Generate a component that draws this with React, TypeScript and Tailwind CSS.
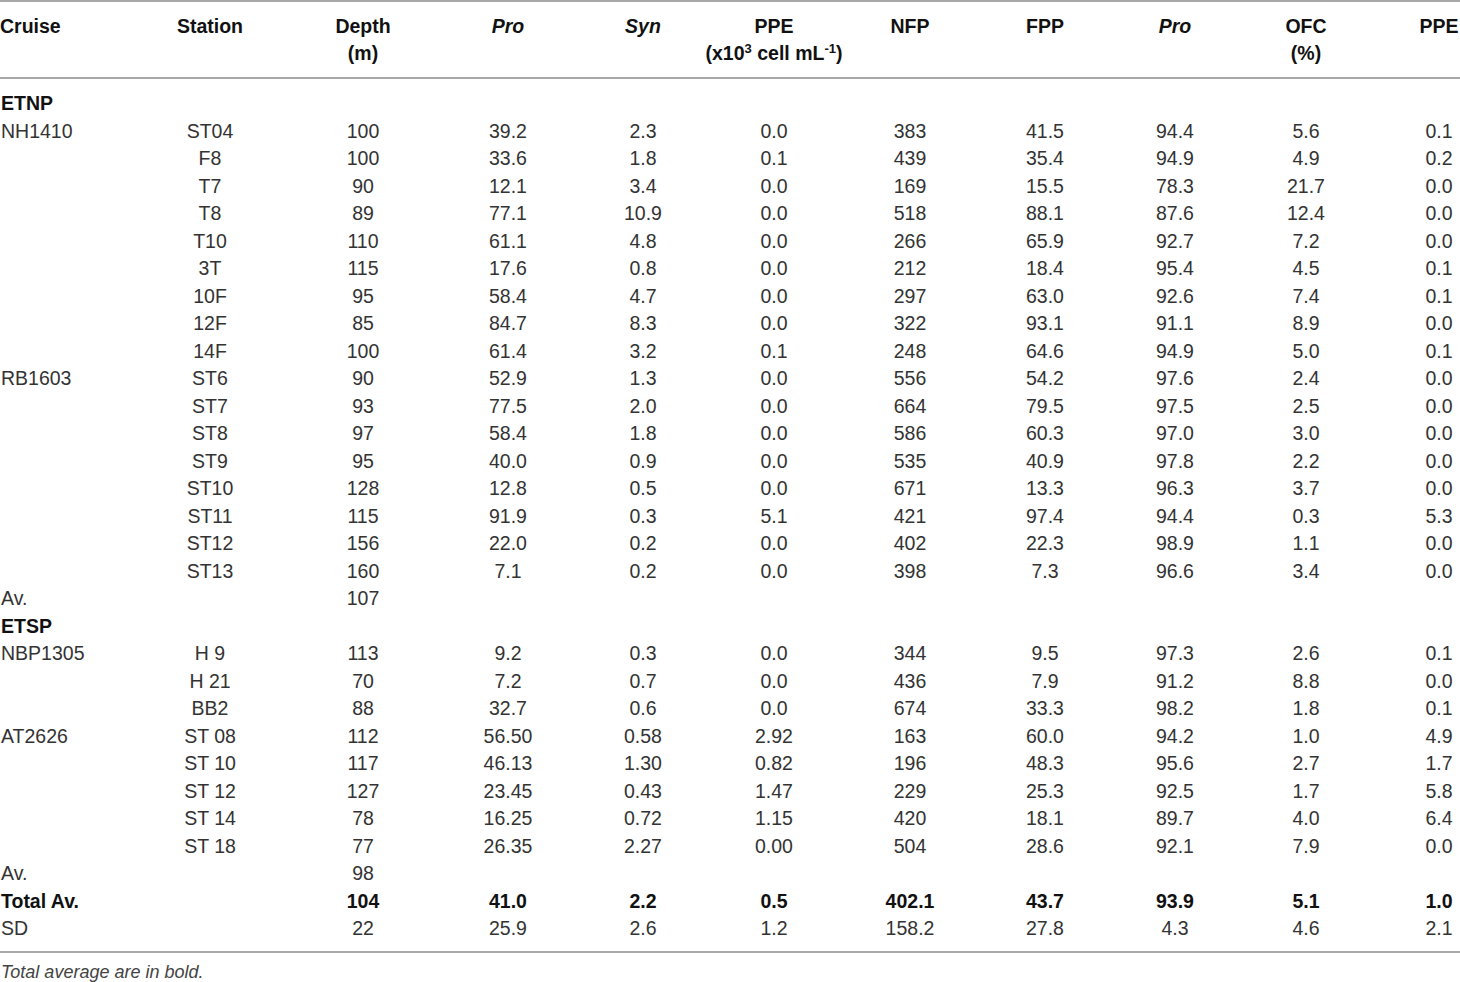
const cols = 'grid grid-cols-[86px_248px_58px_232px_38px_224px_48px_222px_38px_224px_42px]';

type Row = { cruise?: string; kind?: 'group' | 'total'; cells: string[] };

const rows: Row[] = [
  { cruise: 'ETNP', kind: 'group', cells: [] },
  { cruise: 'NH1410', cells: ['ST04', '100', '39.2', '2.3', '0.0', '383', '41.5', '94.4', '5.6', '0.1'] },
  { cells: ['F8', '100', '33.6', '1.8', '0.1', '439', '35.4', '94.9', '4.9', '0.2'] },
  { cells: ['T7', '90', '12.1', '3.4', '0.0', '169', '15.5', '78.3', '21.7', '0.0'] },
  { cells: ['T8', '89', '77.1', '10.9', '0.0', '518', '88.1', '87.6', '12.4', '0.0'] },
  { cells: ['T10', '110', '61.1', '4.8', '0.0', '266', '65.9', '92.7', '7.2', '0.0'] },
  { cells: ['3T', '115', '17.6', '0.8', '0.0', '212', '18.4', '95.4', '4.5', '0.1'] },
  { cells: ['10F', '95', '58.4', '4.7', '0.0', '297', '63.0', '92.6', '7.4', '0.1'] },
  { cells: ['12F', '85', '84.7', '8.3', '0.0', '322', '93.1', '91.1', '8.9', '0.0'] },
  { cells: ['14F', '100', '61.4', '3.2', '0.1', '248', '64.6', '94.9', '5.0', '0.1'] },
  { cruise: 'RB1603', cells: ['ST6', '90', '52.9', '1.3', '0.0', '556', '54.2', '97.6', '2.4', '0.0'] },
  { cells: ['ST7', '93', '77.5', '2.0', '0.0', '664', '79.5', '97.5', '2.5', '0.0'] },
  { cells: ['ST8', '97', '58.4', '1.8', '0.0', '586', '60.3', '97.0', '3.0', '0.0'] },
  { cells: ['ST9', '95', '40.0', '0.9', '0.0', '535', '40.9', '97.8', '2.2', '0.0'] },
  { cells: ['ST10', '128', '12.8', '0.5', '0.0', '671', '13.3', '96.3', '3.7', '0.0'] },
  { cells: ['ST11', '115', '91.9', '0.3', '5.1', '421', '97.4', '94.4', '0.3', '5.3'] },
  { cells: ['ST12', '156', '22.0', '0.2', '0.0', '402', '22.3', '98.9', '1.1', '0.0'] },
  { cells: ['ST13', '160', '7.1', '0.2', '0.0', '398', '7.3', '96.6', '3.4', '0.0'] },
  { cruise: 'Av.', cells: ['', '107'] },
  { cruise: 'ETSP', kind: 'group', cells: [] },
  { cruise: 'NBP1305', cells: ['H 9', '113', '9.2', '0.3', '0.0', '344', '9.5', '97.3', '2.6', '0.1'] },
  { cells: ['H 21', '70', '7.2', '0.7', '0.0', '436', '7.9', '91.2', '8.8', '0.0'] },
  { cells: ['BB2', '88', '32.7', '0.6', '0.0', '674', '33.3', '98.2', '1.8', '0.1'] },
  { cruise: 'AT2626', cells: ['ST 08', '112', '56.50', '0.58', '2.92', '163', '60.0', '94.2', '1.0', '4.9'] },
  { cells: ['ST 10', '117', '46.13', '1.30', '0.82', '196', '48.3', '95.6', '2.7', '1.7'] },
  { cells: ['ST 12', '127', '23.45', '0.43', '1.47', '229', '25.3', '92.5', '1.7', '5.8'] },
  { cells: ['ST 14', '78', '16.25', '0.72', '1.15', '420', '18.1', '89.7', '4.0', '6.4'] },
  { cells: ['ST 18', '77', '26.35', '2.27', '0.00', '504', '28.6', '92.1', '7.9', '0.0'] },
  { cruise: 'Av.', cells: ['', '98'] },
  { cruise: 'Total Av.', kind: 'total', cells: ['', '104', '41.0', '2.2', '0.5', '402.1', '43.7', '93.9', '5.1', '1.0'] },
  { cruise: 'SD', cells: ['', '22', '25.9', '2.6', '1.2', '158.2', '27.8', '4.3', '4.6', '2.1'] },
];

function Cell({ children }: { children?: React.ReactNode }) {
  return <div className="flex justify-center whitespace-nowrap">{children}</div>;
}

function Header() {
  return (
    <div className={`${cols} pt-[11px] pb-[10px] leading-[27px] font-bold text-[#111]`}>
      <div className="whitespace-nowrap">Cruise</div>
      <Cell>Station</Cell>
      <div className="flex flex-col items-center whitespace-nowrap">
        <span>Depth</span>
        <span>(m)</span>
      </div>
      <Cell><i>Pro</i></Cell>
      <Cell><i>Syn</i></Cell>
      <div className="flex flex-col items-center whitespace-nowrap">
        <span>PPE</span>
        <span>
          (x10<sup className="text-[13px] relative -top-[7px]">3</sup> cell mL
          <sup className="text-[13px] relative -top-[7px]">-1</sup>)
        </span>
      </div>
      <Cell>NFP</Cell>
      <Cell>FPP</Cell>
      <Cell><i>Pro</i></Cell>
      <div className="flex flex-col items-center whitespace-nowrap">
        <span>OFC</span>
        <span>(%)</span>
      </div>
      <Cell>PPE</Cell>
    </div>
  );
}

export default function App() {
  return (
    <div className="w-[1460px] h-[982px] bg-white overflow-hidden font-['Liberation_Sans',Arial,sans-serif] text-[19.5px] text-[#333]">
      <div className="border-t-2 border-[#a8a8a8]">
        <Header />
      </div>
      <div className="border-t-2 border-[#a8a8a8] pt-[11px] pb-[8px]">
        {rows.map((r, i) => (
          <div
            key={i}
            className={`${cols} h-[27.5px] leading-[27.5px] ${r.kind ? 'font-bold text-[#111]' : ''}`}
          >
            <div className="whitespace-nowrap pl-[1px]">{r.cruise}</div>
            {r.cells.map((c, j) => (
              <Cell key={j}>{c}</Cell>
            ))}
          </div>
        ))}
      </div>
      <div className="border-t-2 border-[#a8a8a8] pt-[6px] pl-[1px] italic text-[18px] text-[#444]">
        Total average are in bold.
      </div>
    </div>
  );
}
